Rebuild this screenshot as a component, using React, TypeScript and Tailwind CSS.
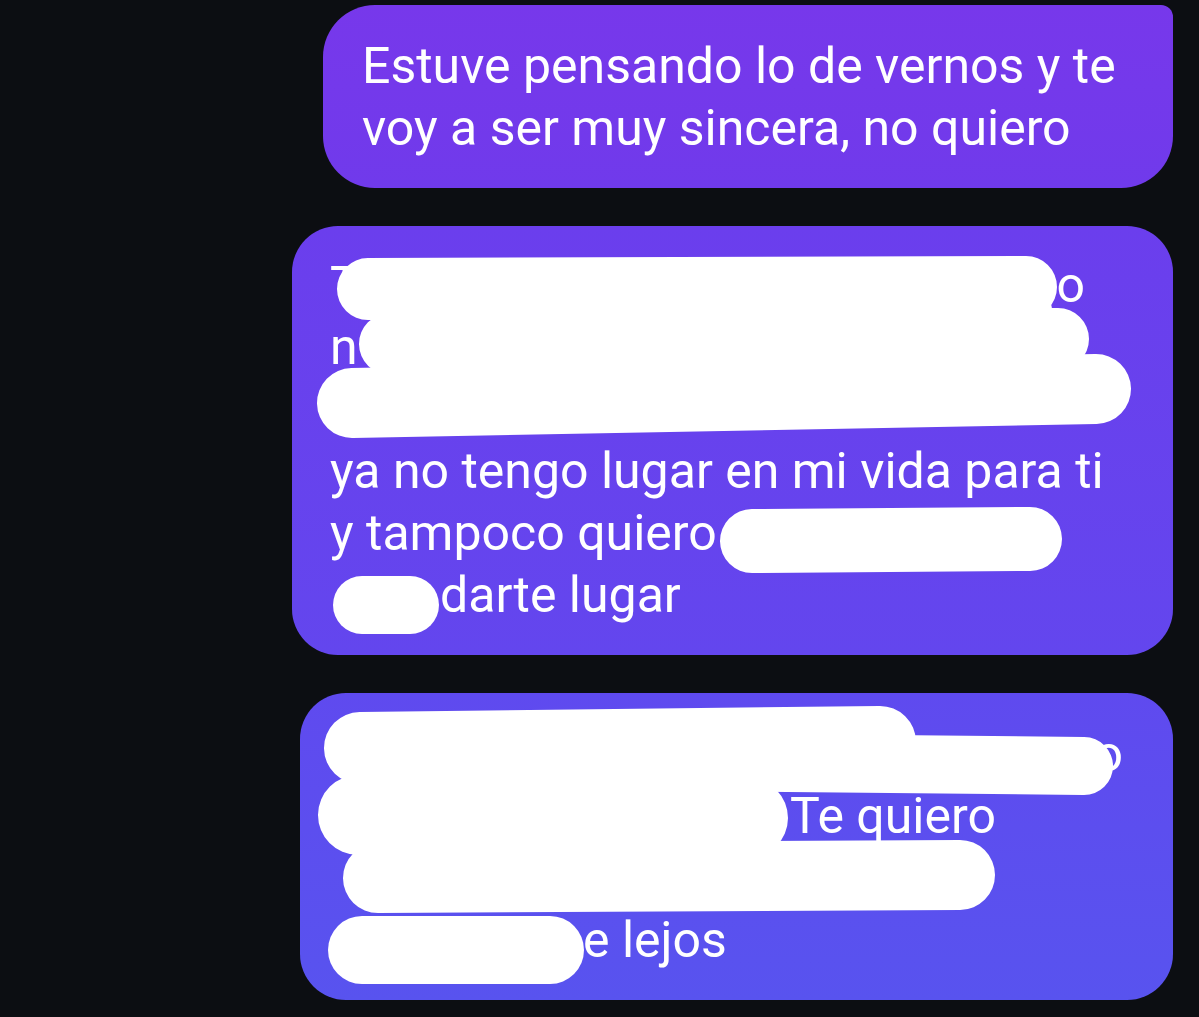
import React from "react";

type Stroke = { d: string; w: number };

// white marker scribbles, drawn in page coordinates and shifted into the bubble
const Scribble: React.FC<{ x: number; y: number; strokes: Stroke[]; fills?: string[] }> = ({
  x,
  y,
  strokes,
  fills = [],
}) => {
  return (
    <svg className="absolute inset-0 w-full h-full overflow-visible pointer-events-none">
      <g transform={`translate(${-x} ${-y})`}>
        {fills.map((p, i) => (
          <path key={"f" + i} d={p} fill="#ffffff" />
        ))}
        {strokes.map((s, i) => (
          <path
            key={i}
            d={s.d}
            stroke="#ffffff"
            strokeWidth={s.w}
            strokeLinecap="round"
            strokeLinejoin="round"
            fill="none"
          />
        ))}
      </g>
    </svg>
  );
};

const bubble2Strokes: Stroke[] = [
  { d: "M 368 290 L 1026 288", w: 62 },
  { d: "M 390 345 L 1058 340", w: 62 },
  { d: "M 352 404 L 1096 390", w: 70 },
  { d: "M 752 542 L 1030 540", w: 64 },
  { d: "M 362 606 L 410 606", w: 58 },
];

const bubble2Fills = ["M 380 295 L 1050 300 L 1070 395 L 380 400 Z"];

const bubble3Strokes: Stroke[] = [
  { d: "M 360 748 L 880 742", w: 72 },
  { d: "M 700 762 L 1084 766", w: 58 },
  { d: "M 358 815 L 748 818", w: 80 },
  { d: "M 378 878 L 960 875", w: 70 },
  { d: "M 362 950 L 550 950", w: 68 },
];

const bubble3Fills = ["M 400 760 L 760 760 L 760 860 L 400 860 Z"];

const App: React.FC = () => {
  return (
    <div
      className="min-h-[1017px] w-full bg-[#0c0e12] flex flex-col items-end pr-[26px] pt-[5px] gap-[38px] text-white text-[50px] leading-[62px]"
      style={{ fontFamily: "Roboto, 'Liberation Sans', sans-serif" }}
    >
      <div className="w-[850px] h-[183px] px-[39px] py-[30px] rounded-[52px] rounded-tr-[12px] bg-linear-to-b from-[#7738eb] to-[#703aeb]">
        <p>Estuve pensando lo de vernos y te</p>
        <p>voy a ser muy sincera, no quiero</p>
      </div>

      <div className="relative w-[881px] h-[429px] px-[38px] py-[28px] rounded-[46px] bg-linear-to-b from-[#6b3eed] to-[#6346ee]">
        <div className="flex">
          <span>T</span>
          <span className="ml-auto mr-[50px]">o</span>
        </div>
        <div>n</div>
        <div>l</div>
        <p>ya no tengo lugar en mi vida para ti</p>
        <p>y tampoco quiero</p>
        <p className="pl-[110px]">darte lugar</p>
        <Scribble x={292} y={227} strokes={bubble2Strokes} fills={bubble2Fills} />
      </div>

      <div className="relative w-[873px] h-[307px] px-[38px] py-[30px] rounded-[46px] bg-linear-to-b from-[#5f4aef] to-[#5853ef]">
        <div className="flex">
          <span className="ml-auto mr-[12px]">o</span>
        </div>
        <p className="pl-[452px]">Te quiero</p>
        <p>&nbsp;</p>
        <p className="pl-[245px]">e lejos</p>
        <Scribble x={300} y={693} strokes={bubble3Strokes} fills={bubble3Fills} />
      </div>
    </div>
  );
};

export default App;
